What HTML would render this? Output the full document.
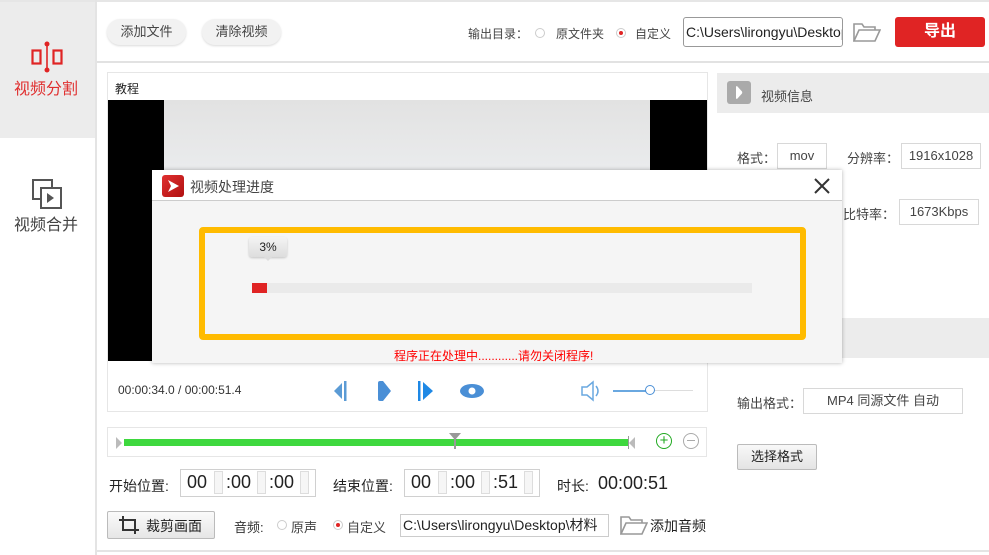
<!DOCTYPE html>
<html><head><meta charset="utf-8">
<style>
*{margin:0;padding:0;box-sizing:border-box}
body{width:989px;height:555px;position:relative;overflow:hidden;background:#fff;font-family:"Liberation Sans","Noto Sans CJK SC",sans-serif;color:#333;font-size:13px}
.a{position:absolute}
.t{position:absolute;white-space:nowrap}
.pill{position:absolute;background:#f2f2f2;border-radius:13px;box-shadow:0 1px 2px rgba(0,0,0,.15);text-align:center;line-height:26px;font-size:13px;color:#444}
.box{position:absolute;border:1px solid #d8d8d8;background:#fff;text-align:center;font-size:13px;color:#444}
.radio{position:absolute;width:10px;height:10px;border:1px solid #ccc;border-radius:50%;background:#fff}
.radio.on::after{content:"";position:absolute;left:2px;top:2px;width:4px;height:4px;border-radius:50%;background:#e02424}
.spin{position:absolute;width:9px;height:23px;border:1px solid #ddd;background:#f6f6f6}
.tb{position:absolute;border:1px solid #d0d0d0;background:#fff;height:28px}
</style></head><body>
<div class="a" style="left:0;top:0;width:989px;height:2px;background:#e6e6e6"></div>
<div class="a" style="left:0;top:2px;width:95px;height:136px;background:#ececec"></div>
<div class="a" style="left:95px;top:0;width:2px;height:555px;background:#e4e4e4"></div>
<svg class="a" style="left:30px;top:40px" width="34" height="34" viewBox="0 0 34 34"><rect x="2.5" y="10.5" width="8" height="13" fill="none" stroke="#e02424" stroke-width="2.2"/><rect x="23.5" y="10.5" width="8" height="13" fill="none" stroke="#e02424" stroke-width="2.2"/><line x1="17" y1="4" x2="17" y2="30" stroke="#e02424" stroke-width="1.6"/><circle cx="17" cy="4" r="2.5" fill="#e02424"/><circle cx="17" cy="30" r="2.5" fill="#e02424"/></svg>
<div class="t" style="left:14px;top:75px;font-size:16px;color:#e03030">视频分割</div>
<svg class="a" style="left:31px;top:178px" width="32" height="32" viewBox="0 0 32 32"><rect x="2" y="2" width="19" height="19" fill="none" stroke="#555" stroke-width="2"/><rect x="10" y="10" width="20" height="20" fill="#fff" stroke="#555" stroke-width="2"/><path d="M16 15 L23 20 L16 25Z" fill="#555"/></svg>
<div class="t" style="left:14px;top:211px;font-size:16px;color:#444">视频合并</div>
<div class="a" style="left:97px;top:550px;width:892px;height:2px;background:#e4e4e4"></div>
<div class="pill" style="left:107px;top:19px;width:79px">添加文件</div>
<div class="pill" style="left:202px;top:19px;width:79px">清除视频</div>
<div class="a" style="left:97px;top:61px;width:892px;height:2px;background:#e2e2e2"></div>
<div class="t" style="left:468px;top:25px;font-size:12px;color:#444">输出目录：</div>
<div class="radio" style="left:535px;top:28px"></div>
<div class="t" style="left:556px;top:25px;font-size:12px;color:#444">原文件夹</div>
<div class="radio on" style="left:616px;top:28px"></div>
<div class="t" style="left:635px;top:25px;font-size:12px;color:#444">自定义</div>
<div class="a" style="left:683px;top:17px;width:160px;height:30px;border:1px solid #999;border-radius:3px;overflow:hidden;font-size:14px;line-height:28px;padding-left:2px;color:#222;white-space:nowrap">C:\Users\lirongyu\Desktop</div>
<svg class="a" style="left:853px;top:22px" width="28" height="20" viewBox="0 0 28 20"><path d="M1 19 V2 H9 L11 5 H22 V8" fill="none" stroke="#999" stroke-width="1.6"/><path d="M1 19 L6 8 H27 L22 19Z" fill="none" stroke="#999" stroke-width="1.6"/></svg>
<div class="a" style="left:895px;top:17px;width:90px;height:30px;background:#e02424;border-radius:3px;color:#fff;font-size:16px;font-weight:bold;text-align:center;line-height:30px">导出</div>
<div class="a" style="left:107px;top:72px;width:601px;height:340px;border:1px solid #e6e6e6"></div>
<div class="t" style="left:115px;top:80px;font-size:12px;color:#222">教程</div>
<div class="a" style="left:108px;top:100px;width:599px;height:261px;background:#000"></div>
<div class="a" style="left:164px;top:100px;width:486px;height:261px;background:linear-gradient(#e2e2e2,#eef0f2 40%,#e0e0e0)"></div>
<div class="t" style="left:118px;top:383px;font-size:12px;color:#333">00:00:34.0 / 00:00:51.4</div>
<svg class="a" style="left:330px;top:378px" width="170" height="26" viewBox="0 0 170 26"><path d="M4 13 L12 5 V21Z" fill="#5b9bd5"/><rect x="14" y="3" width="2.5" height="20" fill="#5b9bd5"/><path d="M48 5 Q48 3 50 3 H53 L61 13 L53 23 H50 Q48 23 48 21Z" fill="#4a8fd6"/><rect x="88" y="3" width="2.5" height="20" fill="#1e88e5"/><path d="M93 4 L103 13 L93 22Z" fill="#1e88e5"/><ellipse cx="142" cy="13" rx="12" ry="7" fill="#4a8fd6"/><circle cx="142" cy="13" r="3.5" fill="#fff"/></svg>
<svg class="a" style="left:580px;top:380px" width="24" height="22" viewBox="0 0 24 22"><path d="M2 7 H7 L13 2 V20 L7 15 H2Z" fill="none" stroke="#6aa8e0" stroke-width="1.5"/><path d="M16 6 Q20 11 16 16" fill="none" stroke="#6aa8e0" stroke-width="1.5"/></svg>
<div class="a" style="left:613px;top:390px;width:80px;height:1px;background:#ddd"></div>
<div class="a" style="left:613px;top:390px;width:36px;height:2px;background:#6aa8e0"></div>
<div class="a" style="left:645px;top:385px;width:10px;height:10px;border:1.5px solid #4a8fd6;border-radius:50%;background:#fff"></div>
<div class="a" style="left:107px;top:427px;width:600px;height:30px;border:1px solid #e6e6e6"></div>
<div class="a" style="left:116px;top:437px;width:0;height:0;border-top:6px solid transparent;border-bottom:6px solid transparent;border-left:6px solid #bbb"></div>
<div class="a" style="left:124px;top:439px;width:504px;height:7px;background:#3ed83e"></div>
<div class="a" style="left:629px;top:437px;width:0;height:0;border-top:6px solid transparent;border-bottom:6px solid transparent;border-right:6px solid #bbb"></div>
<div class="a" style="left:628px;top:436px;width:1px;height:13px;background:#999"></div>
<div class="a" style="left:449px;top:433px;width:0;height:0;border-left:6px solid transparent;border-right:6px solid transparent;border-top:7px solid #999"></div>
<div class="a" style="left:454px;top:436px;width:1.5px;height:13px;background:#999"></div>
<div class="a" style="left:656px;top:433px;width:16px;height:16px;border:1.3px solid #22aa22;border-radius:50%;color:#22aa22;text-align:center;line-height:13px;font-size:15px">+</div>
<div class="a" style="left:683px;top:433px;width:16px;height:16px;border:1.3px solid #aaa;border-radius:50%"><div class="a" style="left:3px;top:6px;width:8px;height:1.3px;background:#aaa"></div></div>
<div class="t" style="left:109px;top:476px;font-size:14px;color:#222">开始位置:</div>
<div class="tb" style="left:180px;top:469px;width:136px"></div>
<div class="t" style="left:187px;top:472px;font-size:18px;color:#222">00</div>
<div class="spin" style="left:214px;top:471px"></div>
<div class="t" style="left:226px;top:472px;font-size:18px;color:#222">:00</div>
<div class="spin" style="left:257px;top:471px"></div>
<div class="t" style="left:269px;top:472px;font-size:18px;color:#222">:00</div>
<div class="spin" style="left:300px;top:471px"></div>
<div class="t" style="left:333px;top:476px;font-size:14px;color:#222">结束位置:</div>
<div class="tb" style="left:404px;top:469px;width:136px"></div>
<div class="t" style="left:411px;top:472px;font-size:18px;color:#222">00</div>
<div class="spin" style="left:438px;top:471px"></div>
<div class="t" style="left:450px;top:472px;font-size:18px;color:#222">:00</div>
<div class="spin" style="left:481px;top:471px"></div>
<div class="t" style="left:493px;top:472px;font-size:18px;color:#222">:51</div>
<div class="spin" style="left:524px;top:471px"></div>
<div class="t" style="left:557px;top:476px;font-size:14px;color:#222">时长:</div>
<div class="t" style="left:598px;top:473px;font-size:18px;color:#222">00:00:51</div>
<div class="a" style="left:107px;top:511px;width:108px;height:28px;border:1px solid #bbb;border-radius:2px;background:linear-gradient(#fafafa,#e6e6e6)"></div>
<svg class="a" style="left:118px;top:515px" width="22" height="20" viewBox="0 0 22 20"><path d="M5 1 V15 H21 M1 5 H17 V19" fill="none" stroke="#333" stroke-width="2"/></svg>
<div class="t" style="left:146px;top:516px;font-size:14px;color:#222">裁剪画面</div>
<div class="t" style="left:234px;top:517px;font-size:13px;color:#333">音频:</div>
<div class="radio" style="left:277px;top:520px"></div>
<div class="t" style="left:291px;top:517px;font-size:13px;color:#444">原声</div>
<div class="radio on" style="left:333px;top:520px"></div>
<div class="t" style="left:347px;top:517px;font-size:13px;color:#444">自定义</div>
<div class="a" style="left:400px;top:514px;width:209px;height:23px;border:1px solid #ccc;overflow:hidden;font-size:14px;line-height:21px;padding-left:2px;color:#222;white-space:nowrap">C:\Users\lirongyu\Desktop\材料</div>
<svg class="a" style="left:620px;top:515px" width="28" height="20" viewBox="0 0 28 20"><path d="M1 19 V2 H9 L11 5 H22 V8" fill="none" stroke="#999" stroke-width="1.6"/><path d="M1 19 L6 8 H27 L22 19Z" fill="none" stroke="#999" stroke-width="1.6"/></svg>
<div class="t" style="left:650px;top:516px;font-size:14px;color:#222">添加音频</div>
<div class="a" style="left:717px;top:73px;width:272px;height:40px;background:#ececec"></div>
<div class="a" style="left:727px;top:81px;width:24px;height:23px;background:#aaa;border-radius:3px"></div>
<svg class="a" style="left:727px;top:81px" width="24" height="23" viewBox="0 0 24 23"><path d="M9 6 Q9 5 10 5 L15 10.5 Q15.5 11.5 15 12.5 L10 18 Q9 18 9 17Z" fill="#fff"/></svg>
<div class="t" style="left:761px;top:86px;font-size:13px;color:#444">视频信息</div>
<div class="t" style="left:737px;top:148px;font-size:13px;color:#444">格式：</div>
<div class="box" style="left:777px;top:143px;width:50px;height:26px;line-height:24px">mov</div>
<div class="t" style="left:847px;top:148px;font-size:13px;color:#444">分辨率：</div>
<div class="box" style="left:901px;top:143px;width:80px;height:26px;line-height:24px">1916x1028</div>
<div class="t" style="left:843px;top:204px;font-size:13px;color:#444">比特率：</div>
<div class="box" style="left:899px;top:199px;width:80px;height:26px;line-height:24px">1673Kbps</div>
<div class="a" style="left:717px;top:318px;width:272px;height:40px;background:#ececec"></div>
<div class="t" style="left:737px;top:393px;font-size:13px;color:#444">输出格式：</div>
<div class="box" style="left:803px;top:388px;width:160px;height:26px;line-height:24px">MP4 同源文件 自动</div>
<div class="a" style="left:737px;top:444px;width:80px;height:26px;border:1px solid #bbb;border-radius:2px;background:linear-gradient(#f8f8f8,#e4e4e4);text-align:center;line-height:24px;font-size:13px;color:#222">选择格式</div>
<div class="a" style="left:152px;top:170px;width:690px;height:193px;background:#f5f5f5;box-shadow:0 0 4px rgba(0,0,0,.3)"></div>
<div class="a" style="left:152px;top:170px;width:690px;height:31px;background:#fff;border-bottom:1px solid #ccc"></div>
<div class="a" style="left:162px;top:175px;width:22px;height:22px;background:linear-gradient(135deg,#e03030,#b01010);border-radius:3px"></div>
<svg class="a" style="left:162px;top:175px" width="22" height="22" viewBox="0 0 22 22"><path d="M6 5 L17 11 L6 17 L9 11Z" fill="#fff"/></svg>
<div class="t" style="left:190px;top:177px;font-size:14px;color:#444">视频处理进度</div>
<svg class="a" style="left:813px;top:177px" width="18" height="18" viewBox="0 0 18 18"><path d="M2 2 L16 16 M16 2 L2 16" stroke="#333" stroke-width="2"/></svg>
<div class="a" style="left:199px;top:227px;width:607px;height:113px;border:6px solid #ffbb00;border-radius:4px"></div>
<div class="a" style="left:249px;top:237px;width:38px;height:20px;background:linear-gradient(#f4f4f4,#ddd);border-radius:3px;box-shadow:0 1px 2px rgba(0,0,0,.2);text-align:center;line-height:20px;font-size:12px;color:#222">3%</div>
<div class="a" style="left:264px;top:257px;width:0;height:0;border-left:4px solid transparent;border-right:4px solid transparent;border-top:4px solid #ddd"></div>
<div class="a" style="left:252px;top:283px;width:500px;height:10px;background:#eaeaea"></div>
<div class="a" style="left:252px;top:283px;width:15px;height:10px;background:#e02424"></div>
<div class="t" style="left:394px;top:347px;font-size:12px;color:#f00">程序正在处理中............请勿关闭程序!</div>
</body></html>
